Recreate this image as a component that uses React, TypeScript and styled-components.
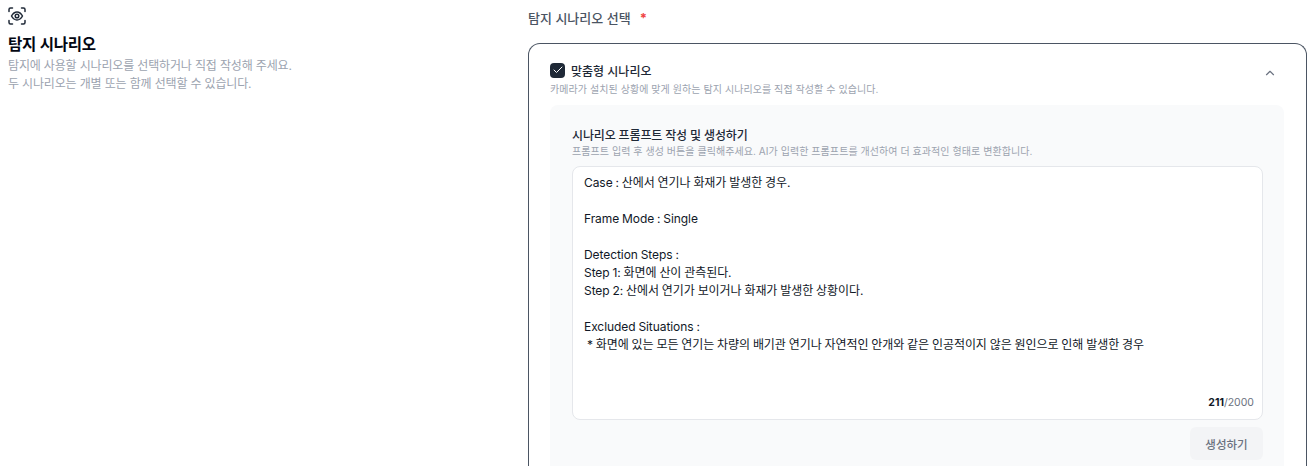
import React from 'react'
import styled, { createGlobalStyle } from 'styled-components'
import { Check, ChevronUp } from 'lucide-react'

const GlobalStyle = createGlobalStyle`
  html, body {
    margin: 0;
    padding: 0;
    height: 466px;
    overflow: hidden;
    background: #fff;
    font-family: Inter, 'Noto Sans CJK KR', sans-serif;
    color: #111827;
  }
`

const Page = styled.div`
  display: grid;
  grid-template-columns: 520px 779px;
  padding: 0 9px 0 8px;
  height: 466px;
  overflow: hidden;
`

const Intro = styled.section`
  padding-top: 7px;
`

const IntroIcon = styled.svg`
  display: block;
  width: 18px;
  height: 18px;
  color: #1f2937;
`

const IntroTitle = styled.h2`
  margin: 9px 0 0;
  font-size: 15.5px;
  line-height: 22px;
  font-weight: 600;
  letter-spacing: -0.25px;
  color: #030712;
`

const IntroText = styled.p`
  margin: 1px 0 0;
  font-size: 12px;
  line-height: 18px;
  letter-spacing: -0.16px;
  color: #9ca3af;
`

const Selection = styled.section`
  padding-top: 8px;
`

const SelectionLabel = styled.div`
  display: flex;
  gap: 9px;
  font-size: 13px;
  line-height: 20px;
  font-weight: 500;
  color: #4b5563;
`

const Required = styled.span`
  color: #ef4444;
  font-weight: 700;
`

const Card = styled.div`
  margin-top: 15px;
  padding: 18px 22px 0 21px;
  border: 1px solid #4b5563;
  border-bottom: 0;
  border-radius: 12px 12px 0 0;
  height: 423px;
  box-sizing: border-box;
`

const CardHead = styled.div`
  display: flex;
  justify-content: space-between;
  align-items: flex-start;
`

const CheckRow = styled.div`
  display: flex;
  align-items: center;
  gap: 6px;
  height: 16px;
  font-size: 12px;
  font-weight: 500;
  color: #1f2937;
`

const CheckBox = styled.span`
  display: flex;
  align-items: center;
  justify-content: center;
  width: 15px;
  height: 15px;
  border-radius: 4px;
  background: #1f2937;
  color: #fff;
`

const CardHint = styled.p`
  margin: 4px 0 0;
  font-size: 10px;
  line-height: 14px;
  letter-spacing: 0.07px;
  color: #9ca3af;
`

const Toggle = styled(ChevronUp)`
  width: 14px;
  height: 14px;
  margin: 4px 7px 0 0;
  color: #6b7280;
`

const Panel = styled.div`
  margin-top: 9px;
  padding: 23px 21px 0 22px;
  background: #f9fafb;
  border-radius: 8px 8px 0 0;
  height: 361px;
  box-sizing: border-box;
`

const PanelTitle = styled.h3`
  margin: 0;
  font-size: 12px;
  line-height: 16px;
  font-weight: 500;
  letter-spacing: -0.15px;
  color: #1f2937;
`

const PanelHint = styled.p`
  margin: 0;
  font-size: 10px;
  line-height: 14px;
  letter-spacing: 0.06px;
  color: #9ca3af;
`

const Editor = styled.div`
  position: relative;
  margin-top: 8px;
  height: 254px;
  padding: 7px 11px;
  box-sizing: border-box;
  background: #fff;
  border: 1px solid #e5e7eb;
  border-radius: 8px;
`

const Prompt = styled.pre`
  margin: 0;
  font: inherit;
  font-size: 12px;
  line-height: 18px;
  letter-spacing: -0.07px;
  word-spacing: -0.4px;
  color: #111827;
  white-space: pre-wrap;
`

const Counter = styled.span`
  position: absolute;
  right: 8px;
  bottom: 9px;
  font-size: 10.5px;
  line-height: 14px;
  color: #6b7280;

  b {
    font-weight: 700;
    color: #111827;
  }
`

const Actions = styled.div`
  display: flex;
  justify-content: flex-end;
  margin-top: 7px;
`

const Generate = styled.button`
  width: 73px;
  height: 33px;
  border: 0;
  border-radius: 6px;
  background: #f3f4f6;
  color: #6b7280;
  font: inherit;
  font-size: 11.5px;
  font-weight: 500;
`

const promptText = `Case : 산에서 연기나 화재가 발생한 경우.

Frame Mode : Single

Detection Steps :
Step 1: 화면에 산이 관측된다.
Step 2: 산에서 연기가 보이거나 화재가 발생한 상황이다.

Excluded Situations :
 * 화면에 있는 모든 연기는 차량의 배기관 연기나 자연적인 안개와 같은 인공적이지 않은 원인으로 인해 발생한 경우`

export default function App() {
  return (
    <>
      <GlobalStyle />
      <Page>
        <Intro>
          <IntroIcon viewBox="0 0 18 18" fill="none" stroke="currentColor" strokeWidth="1.5" strokeLinecap="round" strokeLinejoin="round">
            <path d="M1 4.5V2.5A1.5 1.5 0 0 1 2.5 1H4.5" />
            <path d="M13.5 1H15.5A1.5 1.5 0 0 1 17 2.5V4.5" />
            <path d="M17 13.5V15.5A1.5 1.5 0 0 1 15.5 17H13.5" />
            <path d="M4.5 17H2.5A1.5 1.5 0 0 1 1 15.5V13.5" />
            <path d="M3.5 9C5 6.3 7 5 9 5S13 6.3 14.5 9C13 11.7 11 13 9 13S5 11.7 3.5 9Z" />
            <circle cx="9" cy="9" r="1.8" />
          </IntroIcon>
          <IntroTitle>탐지 시나리오</IntroTitle>
          <IntroText>
            탐지에 사용할 시나리오를 선택하거나 직접 작성해 주세요.
            <br />두 시나리오는 개별 또는 함께 선택할 수 있습니다.
          </IntroText>
        </Intro>
        <Selection>
          <SelectionLabel>
            탐지 시나리오 선택 <Required>*</Required>
          </SelectionLabel>
          <Card>
            <CardHead>
              <div>
                <CheckRow>
                  <CheckBox>
                    <Check size={12} strokeWidth={2} />
                  </CheckBox>
                  맞춤형 시나리오
                </CheckRow>
                <CardHint>카메라가 설치된 상황에 맞게 원하는 탐지 시나리오를 직접 작성할 수 있습니다.</CardHint>
              </div>
              <Toggle />
            </CardHead>
            <Panel>
              <PanelTitle>시나리오 프롬프트 작성 및 생성하기</PanelTitle>
              <PanelHint>프롬프트 입력 후 생성 버튼을 클릭해주세요. AI가 입력한 프롬프트를 개선하여 더 효과적인 형태로 변환합니다.</PanelHint>
              <Editor>
                <Prompt>{promptText}</Prompt>
                <Counter>
                  <b>211</b>/2000
                </Counter>
              </Editor>
              <Actions>
                <Generate>생성하기</Generate>
              </Actions>
            </Panel>
          </Card>
        </Selection>
      </Page>
    </>
  )
}
